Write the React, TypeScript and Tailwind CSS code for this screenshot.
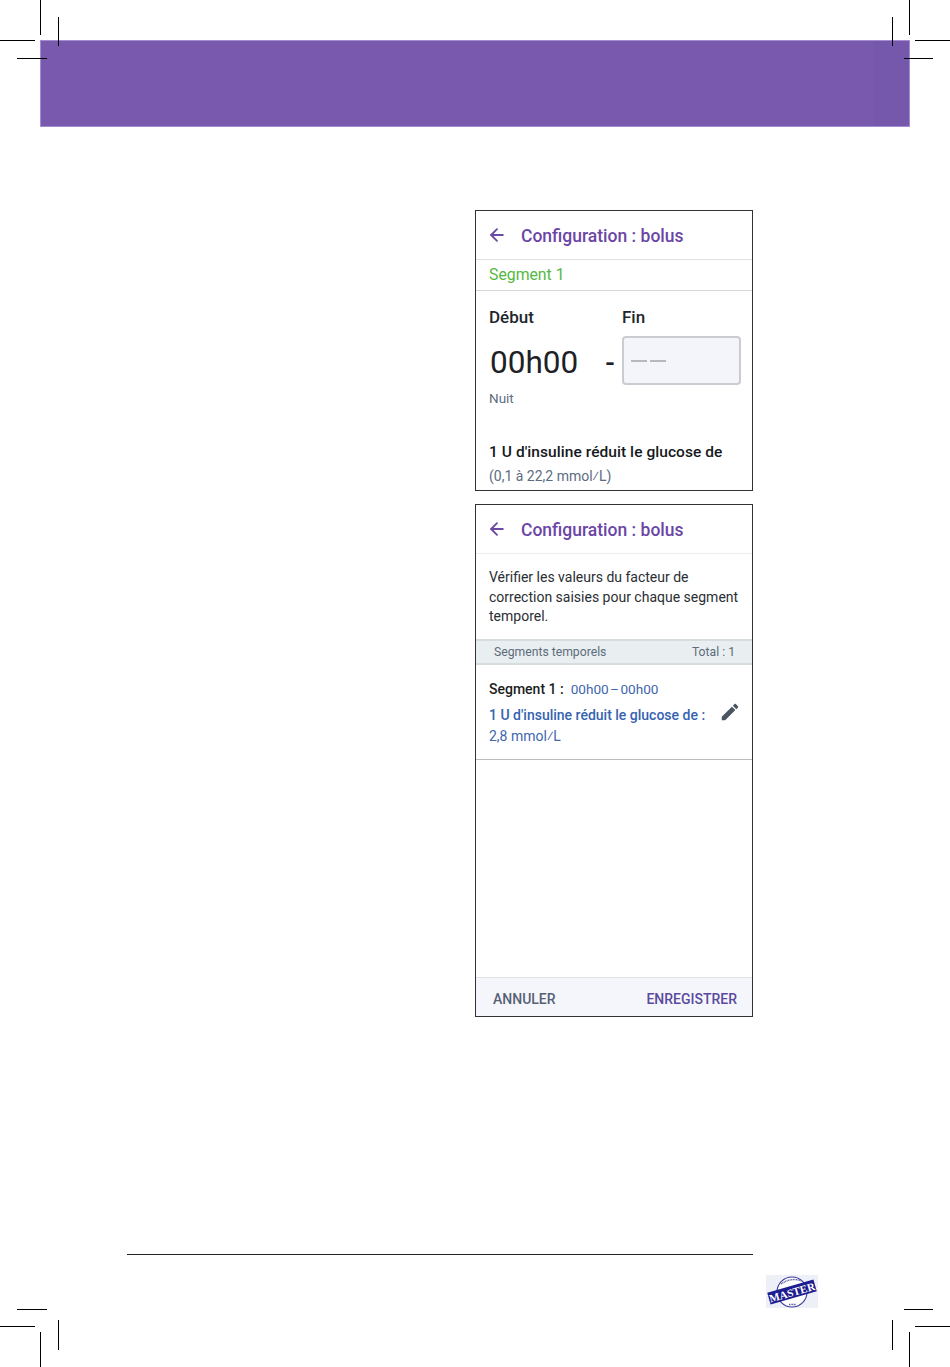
import React from 'react';
import { ArrowLeft } from 'lucide-react';

const font = "font-['Roboto',sans-serif]";

const marks = [
  // top left
  'left-[40px] top-0 w-px h-[35px]',
  'left-[58px] top-[17px] w-px h-[29px]',
  'left-0 top-[40px] w-[35px] h-px',
  'left-[17px] top-[58px] w-[30px] h-px',
  // top right
  'left-[909px] top-0 w-px h-[35px]',
  'left-[892px] top-[17px] w-px h-[29px]',
  'left-[915px] top-[40px] w-[35px] h-px',
  'left-[904px] top-[58px] w-[29px] h-px',
  // bottom left
  'left-[40px] top-[1332px] w-px h-[35px]',
  'left-[58px] top-[1320px] w-px h-[30px]',
  'left-0 top-[1326px] w-[35px] h-px',
  'left-[17px] top-[1309px] w-[30px] h-px',
  // bottom right
  'left-[909px] top-[1332px] w-px h-[35px]',
  'left-[892px] top-[1320px] w-px h-[30px]',
  'left-[915px] top-[1326px] w-[35px] h-px',
  'left-[904px] top-[1309px] w-[29px] h-px',
];

const ScreenHeader: React.FC<{ className: string }> = ({ className }) => (
  <div className={`flex items-center pl-[11px] ${className}`}>
    <ArrowLeft size={20} strokeWidth={2.2} className="text-[#6b4aa5]" />
    <span className="ml-[14px] pt-[2px] text-[17.5px] font-medium text-[#6b45a6]">Configuration : bolus</span>
  </div>
);

const MasterLogo: React.FC = () => (
  <svg width="52" height="34" viewBox="0 0 52 34" className="block">
    <rect x="0" y="0" width="52" height="33" fill="#eef0f8" />
    <circle cx="26" cy="17" r="15" fill="#ffffff" stroke="#3a3a9c" strokeWidth="1.1" />
    {/* microtext in the ring, too small to read */}
    <path d="M15 9 Q25 2 36 6" fill="none" stroke="#55559f" strokeWidth="1.4" strokeDasharray="1 0.6" />
    <path d="M23 29.5 H30" fill="none" stroke="#55559f" strokeWidth="1.4" strokeDasharray="1 0.6" />
    <g transform="rotate(-16 26 17)">
      <rect x="2" y="11" width="48" height="12" fill="#1d1d8f" />
      <text x="26" y="21.2" textAnchor="middle" fontSize="11" fontWeight="700" fontFamily="'Liberation Serif', serif" fill="#ffffff">MASTER</text>
    </g>
  </svg>
);

export default function App() {
  return (
    <div className={`relative w-[950px] h-[1367px] overflow-hidden bg-white ${font}`}>
      {/* print crop marks */}
      {marks.map((m) => (
        <div key={m} className={`absolute bg-black ${m}`} />
      ))}

      {/* purple band */}
      <div className="mt-[40px] ml-[40px] w-[870px] h-[87px] flex justify-end bg-[#7859ae] border border-[#a48cd0]">
        <div className="w-[35px] h-full bg-[#7557ab]" />
      </div>

      <div className="pl-[475px] pt-[83px]">
        {/* first phone screen */}
        <div className="w-[278px] h-[281px] border border-[#333] overflow-hidden">
          <ScreenHeader className="h-[49px] border-b border-[#dfdfe2]" />
          <div className="h-[31px] flex items-center pl-[13px] border-b border-[#d6d6da] text-[15.8px] text-[#55b83f]">
            Segment 1
          </div>
          <div className="flex pl-[13px] pt-[16px]">
            <div className="w-[133px]">
              <div className="text-[17px] leading-[20px] font-medium text-[#22262c]">Début</div>
              <div className="flex mt-[16px] items-center h-[40px]">
                <span className="ml-[1px] text-[31.5px] leading-[40px] text-[#1d2126]">00h00</span>
                <span className="ml-[27px] text-[28px] leading-[40px] font-medium text-[#1d2126]">-</span>
              </div>
              <div className="mt-[6px] text-[13.5px] leading-[18px] text-[#5d6c80]">Nuit</div>
            </div>
            <div>
              <div className="text-[17px] leading-[20px] font-medium text-[#22262c]">Fin</div>
              <div className="mt-[9px] w-[119px] h-[49px] flex items-center pl-[7px] bg-[#f3f5fb] border-2 border-[#c9cdd2] rounded-[4px] text-[17px] tracking-[1px] text-[#b5b8bd]">
                <span className="w-[16px] h-[2px] bg-[#b5b8bd]" />
                <span className="ml-[3px] w-[16px] h-[2px] bg-[#b5b8bd]" />
              </div>
            </div>
          </div>
          <div className="pl-[13px] mt-[35px] text-[15.5px] tracking-[0.06px] leading-[20px] font-medium text-[#16191d]">
            1 U d'insuline réduit le glucose de
          </div>
          <div className="pl-[13px] mt-[5px] text-[14px] leading-[18px] text-[#5d6c80]">(0,1 à 22,2 mmol⁄L)</div>
        </div>

        {/* second phone screen */}
        <div className="mt-[13px] w-[278px] h-[513px] border border-[#333] flex flex-col overflow-hidden">
          <ScreenHeader className="h-[49px] border-b border-[#ececee]" />
          <div className="h-[85px] pl-[13px] pt-[14px] text-[14px] leading-[19.5px] text-[#2a2e33]">
            Vérifier les valeurs du facteur de correction saisies pour chaque segment temporel.
          </div>
          <div className="h-[26px] flex items-center justify-between pl-[18px] pr-[17px] pt-[1px] bg-[#e9eef1] border-y-2 border-[#d7dcdf] text-[12.2px] text-[#5d6c7a]">
            <span>Segments temporels</span>
            <span>Total : 1</span>
          </div>
          <div className="relative h-[95px] pl-[13px] pt-[15px] border-b border-[#bcbcbc]">
            <div className="text-[14px] leading-[18px]">
              <span className="font-medium text-[#1a1d21]">Segment 1 :</span>
              <span className="ml-[7px] text-[13.6px] text-[#3f66ad]">00h00{'\u200a'}–{'\u200a'}00h00</span>
            </div>
            <div className="mt-[8px] text-[14px] leading-[18px] font-medium text-[#3563b0]">1 U d'insuline réduit le glucose de :</div>
            <div className="mt-[3px] text-[14px] leading-[18px] text-[#3f66ad]">2,8 mmol⁄L</div>
            <svg width="22" height="22" viewBox="0 0 24 24" className="absolute left-[243px] top-[36px] fill-[#4a5563]">
              <path d="M3 17.25V21h3.75L17.81 9.94l-3.75-3.75L3 17.25zM20.71 7.04c.39-.39.39-1.02 0-1.41l-2.34-2.34c-.39-.39-1.02-.39-1.41 0l-1.83 1.83 3.75 3.75 1.83-1.83z" />
            </svg>
          </div>
          <div className="flex-1" />
          <div className="h-[39px] flex items-center justify-between pl-[17px] pr-[15px] pt-[5px] bg-[#f5f6fb] border-t border-[#dfe2e6] text-[14px] font-medium">
            <span className="text-[#566176]">ANNULER</span>
            <span className="text-[#5a4a9e]">ENREGISTRER</span>
          </div>
        </div>
      </div>

      {/* footer rule and stamp */}
      <div className="mt-[237px] ml-[127px] w-[626px] h-px bg-[#222]" />
      <div className="mt-[20px] ml-[766px] w-[52px]">
        <MasterLogo />
      </div>
    </div>
  );
}
